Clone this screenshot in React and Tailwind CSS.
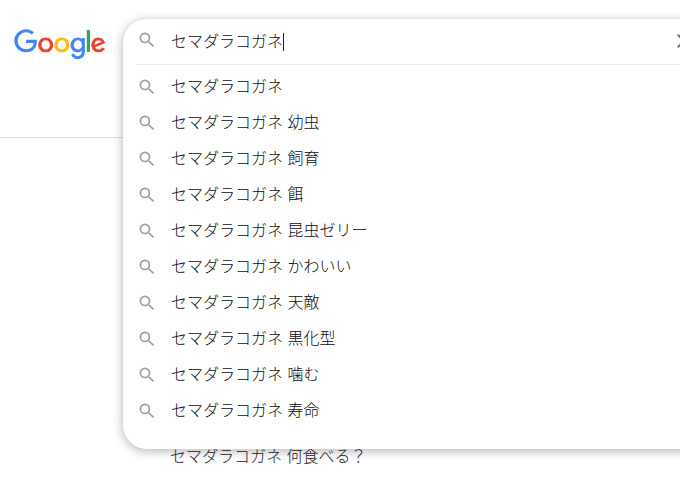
import React from 'react';

const suggestions = ['', '幼虫', '飼育', '餌', '昆虫ゼリー', 'かわいい', '天敵', '黒化型', '噛む', '寿命'];

const SearchIcon = () => (
  <svg viewBox="0 0 24 24" className="w-5 h-5 fill-[#9aa0a6] shrink-0">
    <path d="M15.5 14h-.79l-.28-.27A6.471 6.471 0 0 0 16 9.5 6.5 6.5 0 1 0 9.5 16c1.61 0 3.09-.59 4.23-1.57l.27.28v.79l5 4.99L20.49 19l-4.99-5zm-6 0C7.01 14 5 11.99 5 9.5S7.01 5 9.5 5 14 7.01 14 9.5 11.99 14 9.5 14z" />
  </svg>
);

const GoogleLogo = () => (
  <svg viewBox="0 0 272 92" className="w-[92px] h-[31px]">
    <path fill="#EA4335" d="M115.75 47.18c0 12.77-9.99 22.18-22.25 22.18s-22.25-9.41-22.25-22.18C71.25 34.32 81.24 25 93.5 25s22.25 9.32 22.25 22.18zm-9.74 0c0-7.98-5.79-13.44-12.51-13.44S80.99 39.2 80.99 47.18c0 7.9 5.79 13.44 12.51 13.44s12.51-5.55 12.51-13.44z" />
    <path fill="#FBBC05" d="M163.75 47.18c0 12.77-9.99 22.18-22.25 22.18s-22.25-9.41-22.25-22.18c0-12.85 9.99-22.18 22.25-22.18s22.25 9.32 22.25 22.18zm-9.74 0c0-7.98-5.79-13.44-12.51-13.44s-12.51 5.46-12.51 13.44c0 7.9 5.79 13.44 12.51 13.44s12.51-5.55 12.51-13.44z" />
    <path fill="#4285F4" d="M209.75 26.34v39.82c0 16.38-9.66 23.07-21.08 23.07-10.75 0-17.22-7.19-19.66-13.07l8.48-3.53c1.51 3.61 5.21 7.87 11.17 7.87 7.31 0 11.84-4.51 11.84-13v-3.19h-.34c-2.18 2.69-6.38 5.04-11.68 5.04-11.09 0-21.25-9.66-21.25-22.09 0-12.52 10.16-22.26 21.25-22.26 5.29 0 9.49 2.35 11.68 4.96h.34v-3.61h9.25zm-8.56 20.92c0-7.81-5.21-13.52-11.84-13.52-6.72 0-12.35 5.71-12.35 13.52 0 7.73 5.63 13.36 12.35 13.36 6.63 0 11.84-5.63 11.84-13.36z" />
    <path fill="#34A853" d="M225 3v65h-9.5V3h9.5z" />
    <path fill="#EA4335" d="M262.02 54.48l7.56 5.04c-2.44 3.61-8.32 9.83-18.48 9.83-12.6 0-22.01-9.74-22.01-22.18 0-13.19 9.49-22.18 20.92-22.18 11.51 0 17.14 9.16 18.98 14.11l1.01 2.52-29.65 12.28c2.27 4.45 5.8 6.72 10.75 6.72 4.96 0 8.4-2.44 10.92-6.14zm-23.27-7.98l19.82-8.23c-1.09-2.77-4.37-4.7-8.23-4.7-4.95 0-11.84 4.37-11.59 12.93z" />
    <path fill="#4285F4" d="M35.29 41.41V32H67c.31 1.64.47 3.58.47 5.68 0 7.06-1.93 15.79-8.15 22.01-6.05 6.3-13.78 9.66-24.02 9.66C16.32 69.35.36 53.89.36 34.91.36 15.93 16.32.47 35.3.47c10.5 0 17.98 4.12 23.6 9.49l-6.64 6.64c-4.03-3.78-9.49-6.72-16.97-6.72-13.86 0-24.7 11.17-24.7 25.03 0 13.86 10.84 25.03 24.7 25.03 8.99 0 14.11-3.61 17.39-6.89 2.66-2.66 4.41-6.46 5.1-11.65l-22.49.01z" />
  </svg>
);

const App = () => {
  return (
    <div className="relative h-[480px] overflow-hidden bg-white text-[#0c0c0d] text-base font-light font-['Liberation_Sans','Noto_Sans_CJK_JP',sans-serif]">
      {/* page header under the dropdown */}
      <header className="h-[138px] border-b border-[#dadce0] pl-[14px] pt-[29px]">
        <GoogleLogo />
      </header>
      <div className="pl-[170px] pt-[307px] leading-[24px] text-[#202124]">セマダラコガネ 何食べる？</div>

      {/* search box with suggestions */}
      <div className="absolute left-[123px] top-[19px] w-[640px] h-[430px] bg-white rounded-[24px] shadow-[0_2px_10px_1px_rgba(40,40,45,0.3)]">
        <div className="h-[45px] flex items-start pt-[11px] pl-[14px] relative">
          <SearchIcon />
          <div className="ml-[14px] flex items-center leading-[24px]">
            セマダラコガネ
            <span className="w-px h-[18px] bg-[#202124]"></span>
          </div>
          <svg viewBox="0 0 24 24" className="absolute left-[549px] top-[10px] w-6 h-6 fill-[#70757a]">
            <path d="M19 6.41L17.59 5 12 10.59 6.41 5 5 6.41 10.59 12 5 17.59 6.41 19 12 13.41 17.59 19 19 17.59 13.41 12z" />
          </svg>
        </div>
        <div className="ml-[14px] border-t border-[#e8eaed]"></div>
        <ul className="pt-[4px]">
          {suggestions.map((word) => (
            <li key={word} className="h-9 flex items-center pl-[14px]">
              <SearchIcon />
              <span className="ml-[14px] leading-[24px] whitespace-pre">
                {word ? `セマダラコガネ ${word}` : 'セマダラコガネ'}
              </span>
            </li>
          ))}
        </ul>
      </div>
    </div>
  );
};

export default App;
